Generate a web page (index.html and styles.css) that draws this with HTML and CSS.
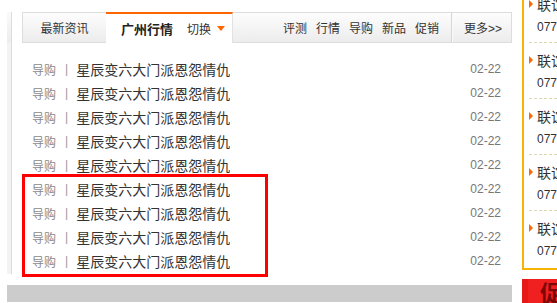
FILE: index.html
```html
<!DOCTYPE html>
<html>
<head>
    <meta charset="UTF-8">
    <title>广州行情</title>
    <link rel="stylesheet" href="styles.css">
</head>
<body>
    <div class="page">
        <div class="left-col">
            <div class="news-row">
                <div class="side-strip"></div>

                <div class="news">
                    <div class="tabbar">
                        <div class="tab">最新资讯</div>
                        <div class="tab active">
                            <span class="city">广州行情</span>
                            <span class="switch">切换</span>
                            <span class="arrow-down"></span>
                        </div>
                        <ul class="links">
                            <li><a href="#">评测</a></li>
                            <li><a href="#">行情</a></li>
                            <li><a href="#">导购</a></li>
                            <li><a href="#">新品</a></li>
                            <li><a href="#">促销</a></li>
                        </ul>
                        <a href="#" class="more">更多&gt;&gt;</a>
                    </div>

                    <ul class="list">
                        <li><span class="cat">导购</span><span class="sep">|</span><a href="#" class="title">星辰变六大门派恩怨情仇</a><span class="date">02-22</span></li>
                        <li><span class="cat">导购</span><span class="sep">|</span><a href="#" class="title">星辰变六大门派恩怨情仇</a><span class="date">02-22</span></li>
                        <li><span class="cat">导购</span><span class="sep">|</span><a href="#" class="title">星辰变六大门派恩怨情仇</a><span class="date">02-22</span></li>
                        <li><span class="cat">导购</span><span class="sep">|</span><a href="#" class="title">星辰变六大门派恩怨情仇</a><span class="date">02-22</span></li>
                        <li><span class="cat">导购</span><span class="sep">|</span><a href="#" class="title">星辰变六大门派恩怨情仇</a><span class="date">02-22</span></li>
                        <li><span class="cat">导购</span><span class="sep">|</span><a href="#" class="title">星辰变六大门派恩怨情仇</a><span class="date">02-22</span></li>
                        <li><span class="cat">导购</span><span class="sep">|</span><a href="#" class="title">星辰变六大门派恩怨情仇</a><span class="date">02-22</span></li>
                        <li><span class="cat">导购</span><span class="sep">|</span><a href="#" class="title">星辰变六大门派恩怨情仇</a><span class="date">02-22</span></li>
                        <li><span class="cat">导购</span><span class="sep">|</span><a href="#" class="title">星辰变六大门派恩怨情仇</a><span class="date">02-22</span></li>
                        <!-- highlight over the last four rows -->
                        <div class="highlight"></div>
                    </ul>
                </div>
            </div>
            <div class="gray-bar"></div>
        </div>

        <div class="right-col">
            <div class="dealers">
                <div class="dealer">
                    <div class="dealer-name">联谊汽车销售</div>
                    <div class="dealer-tel">0771-5888888</div>
                </div>
                <div class="dealer">
                    <div class="dealer-name">联谊汽车销售</div>
                    <div class="dealer-tel">0771-5888888</div>
                </div>
                <div class="dealer">
                    <div class="dealer-name">联谊汽车销售</div>
                    <div class="dealer-tel">0771-5888888</div>
                </div>
                <div class="dealer">
                    <div class="dealer-name">联谊汽车销售</div>
                    <div class="dealer-tel">0771-5888888</div>
                </div>
                <div class="dealer">
                    <div class="dealer-name">联谊汽车销售</div>
                    <div class="dealer-tel">0771-5888888</div>
                </div>
            </div>
            <div class="promo">促销活动</div>
        </div>
    </div>
</body>
</html>
```

FILE: styles.css
```css
* {
    margin: 0;
    padding: 0;
    box-sizing: border-box;
}

body {
    font-family: "Liberation Sans", "Noto Sans CJK SC", sans-serif;
    color: #333;
    background: #fff;
}

a {
    color: inherit;
    text-decoration: none;
}

ul {
    list-style: none;
}

.page {
    display: flex;
    gap: 10px;
    width: 557px;
    height: 303px;
    padding-left: 7px;
    overflow: hidden;
}

/* left column */
.left-col {
    width: 505px;
    flex-shrink: 0;
}
.news-row {
    display: flex;
    margin-top: 12px;
}
.side-strip {
    width: 5px;
    height: 262px;
    background: linear-gradient(#fafafa, #ededed 30px, #f3f3f3 31px, #f3f3f3);
    border-right: 1px solid #dcdcdc;
}
.news {
    width: 490px;
    margin-left: 10px;
}

.tabbar {
    display: flex;
    align-items: center;
    height: 31px;
    border: 1px solid #ddd;
    background: linear-gradient(#fdfdfd, #ececec);
    font-size: 12px;
}
.tab {
    width: 83px;
    height: 100%;
    display: flex;
    align-items: center;
    justify-content: center;
    color: #333;
}
.tab.active {
    width: 127px;
    height: 31px;
    margin: -1px 0;
    justify-content: flex-start;
    padding: 0 0 0 15px;
    background: #fff;
    border-top: 2px solid #f60;
    border-right: 1px solid #e2e2e2;
}
.city {
    font-size: 13px;
    font-weight: bold;
    color: #222;
}
.switch {
    margin-left: 14px;
}
.arrow-down {
    margin-left: 6px;
    width: 0;
    height: 0;
    border-left: 4px solid transparent;
    border-right: 4px solid transparent;
    border-top: 5px solid #f60;
}
.links {
    display: flex;
    gap: 9px;
    margin-left: auto;
    padding-right: 12px;
    height: 100%;
    align-items: center;
    border-right: 1px solid #d6d6d6;
    box-shadow: 1px 0 0 #fafafa;
}
.links li a {
    color: #333;
}
.more {
    padding: 0 9px 0 12px;
    color: #333;
}

.list {
    position: relative;
    padding: 14px 11px 0 10px;
    font-size: 12px;
}
.list li {
    display: flex;
    align-items: center;
    height: 24px;
}
.cat {
    color: #8a8a8a;
}
.sep {
    color: #999;
    margin: 0 8px 0 9px;
}
.title {
    font-size: 14px;
    color: #333;
}
.date {
    margin-left: auto;
    color: #777;
}
.highlight {
    position: absolute;
    left: 0;
    top: 131px;
    width: 246px;
    height: 103px;
    border: 3px solid #f00;
}

.gray-bar {
    height: 17px;
    margin-top: 11px;
    background: #ccc;
}

/* right column */
.right-col {
    width: 220px;
    flex-shrink: 0;
}
.dealers {
    margin-top: -13px;
    border-left: 2px solid #f8b400;
    border-bottom: 2px solid #f8b400;
    padding-left: 5px;
}
.dealer {
    padding: 8px 0 6px;
    border-bottom: 1px dashed #ddd8b4;
}
.dealer:last-child {
    border-bottom: none;
    padding-bottom: 8px;
}
.dealer-name {
    display: flex;
    align-items: center;
    height: 18px;
    font-size: 14px;
    color: #333;
}
.dealer-name::before {
    content: '';
    width: 0;
    height: 0;
    border-top: 4px solid transparent;
    border-bottom: 4px solid transparent;
    border-left: 4px solid #f60;
    margin-right: 4px;
}
.dealer-tel {
    height: 18px;
    line-height: 18px;
    margin-top: 5px;
    padding-left: 8px;
    font-size: 12px;
    color: #333;
}

.promo {
    margin-top: 9px;
    height: 30px;
    padding-left: 12px;
    background: #f02020;
    border-left: 6px solid #e81818;
    color: #7a0808;
    font-size: 22px;
    font-weight: bold;
    line-height: 30px;
}
```
